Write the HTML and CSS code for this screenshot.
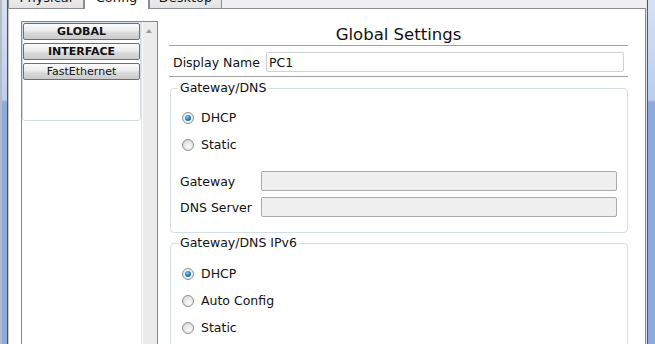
FILE: index.html
```html
<!DOCTYPE html>
<html lang="en">
<head>
    <meta charset="UTF-8">
    <meta name="viewport" content="width=device-width, initial-scale=1.0">
    <title>PC1 - Config</title>
    <link rel="stylesheet" href="styles.css">
</head>
<body>
    <div class="window">
        <div class="frame-left"></div>

        <div class="main">
            <!-- Tabs -->
            <div class="tabs">
                <div class="tab tab-physical">Physical</div>
                <div class="tab tab-config active">Config</div>
                <div class="tab tab-desktop">Desktop</div>
            </div>

            <div class="content">
                <!-- Side menu -->
                <div class="side">
                    <div class="side-list">
                        <div class="list-box">
                            <button class="nav-btn bold">GLOBAL</button>
                            <button class="nav-btn bold">INTERFACE</button>
                            <button class="nav-btn">FastEthernet</button>
                        </div>
                    </div>
                    <div class="side-scroll"><span class="arrow-up"></span></div>
                </div>

                <!-- Settings panel -->
                <div class="panel">
                    <div class="title">Global Settings</div>

                    <div class="name-row">
                        <label class="name-label">Display Name</label>
                        <input class="name-input" type="text" value="PC1">
                    </div>

                    <fieldset class="group">
                        <legend>Gateway/DNS</legend>
                        <div class="opt"><span class="radio checked"></span>DHCP</div>
                        <div class="opt"><span class="radio"></span>Static</div>
                        <div class="field first">
                            <label>Gateway</label>
                            <input class="off-input" type="text" disabled>
                        </div>
                        <div class="field">
                            <label>DNS Server</label>
                            <input class="off-input" type="text" disabled>
                        </div>
                    </fieldset>

                    <fieldset class="group group-v6">
                        <legend>Gateway/DNS IPv6</legend>
                        <div class="opt"><span class="radio checked"></span>DHCP</div>
                        <div class="opt"><span class="radio"></span>Auto Config</div>
                        <div class="opt"><span class="radio"></span>Static</div>
                        <div class="field first">
                            <label>IPv6 Gateway</label>
                            <input class="off-input" type="text" disabled>
                        </div>
                        <div class="field">
                            <label>IPv6 DNS Server</label>
                            <input class="off-input" type="text" disabled>
                        </div>
                    </fieldset>
                </div>
            </div>
        </div>

        <div class="frame-right"></div>
    </div>
</body>
</html>
```

FILE: styles.css
```css
body {
    margin: 0;
    height: 344px;
    overflow: hidden;
    font-family: "DejaVu Sans", Verdana, sans-serif;
    font-size: 12.5px;
    color: #111;
    background-color: #f0f0f0;
}
.window {
    display: flex;
    height: 344px;
}

/* window frame */
.frame-left {
    flex: none;
    width: 8px;
    background:
        linear-gradient(to right, #b7bcc4 0 2px, transparent 2px 7px, #4e5259 7px 8px),
        linear-gradient(to bottom, #d6e1f3 0, #bccdee 100px, #8fa8dd 102px, #8fa8dd 100%);
}
.frame-right {
    flex: none;
    width: 9px;
    background:
        linear-gradient(to right, #e2e2e2 0 1px, #55595f 1px 2px, transparent 2px),
        linear-gradient(to bottom, #d6e1f3 0, #bccdee 100px, #8fa8dd 102px, #8fa8dd 100%);
}
.main {
    flex: none;
    width: 638px;
    display: flex;
    flex-direction: column;
}

/* tabs */
.tabs {
    flex: none;
    display: flex;
    align-items: flex-end;
    height: 8px;
}
.tab {
    flex: none;
    box-sizing: border-box;
    height: 22px;
    padding-top: 3px;
    border: 1px solid #898c93;
    border-bottom: none;
    background: linear-gradient(#f6f6f6, #e3e3e3);
    font-size: 13px;
    line-height: 15px;
    text-align: center;
}
.tab-physical {
    width: 76px;
}
.tab-config {
    width: 65px;
}
.tab-desktop {
    width: 73px;
}
.tab.active {
    position: relative;
    height: 23px;
    margin-bottom: -1px;
    background: #fff;
}

/* content */
.content {
    flex: 1;
    display: flex;
    gap: 11px;
    padding-left: 12px;
    background: #fff;
    border: 1px solid #8a8d94;
    border-left-color: #c4c7cc;
    border-bottom: none;
    overflow: hidden;
}

/* side menu */
.side {
    flex: none;
    box-sizing: border-box;
    width: 137px;
    margin-top: 12px;
    border: 1px solid #828790;
    border-bottom: none;
    display: flex;
}
.side-list {
    width: 119px;
}
.list-box {
    box-sizing: border-box;
    width: 119px;
    height: 99px;
    border: 1px solid #d5dde4;
    border-radius: 0 0 3px 3px;
}
.nav-btn {
    display: block;
    box-sizing: border-box;
    width: 117px;
    height: 17px;
    margin: 0 0 3px;
    padding: 0;
    border: 1px solid #6f6f6f;
    border-radius: 2px;
    background: linear-gradient(#fbfbfb, #ececec 45%, #d9d9d9 60%, #cbcbcb);
    font-family: "DejaVu Sans", Verdana, sans-serif;
    font-size: 11px;
    line-height: 15px;
    color: #111;
}
.nav-btn.bold {
    font-weight: bold;
}
.side-scroll {
    width: 16px;
    display: flex;
    justify-content: center;
    padding-top: 7px;
    background: linear-gradient(to right, #e4e4e4 0 1px, #fafafa 1px 2px, #ececec 2px);
}
.arrow-up {
    width: 0;
    height: 0;
    border-left: 3.5px solid transparent;
    border-right: 3.5px solid transparent;
    border-bottom: 4px solid #9a9a9a;
}

/* settings panel */
.panel {
    flex: none;
    width: 459px;
    display: flex;
    flex-direction: column;
}
.title {
    padding-top: 16px;
    font-size: 16.5px;
    line-height: 20px;
    text-align: center;
    border-bottom: 1px solid #a0a0a0;
}
.name-row {
    display: flex;
    align-items: center;
    padding: 6px 4px 4px;
    border-bottom: 1px solid #a0a0a0;
}
.name-label {
    flex: none;
    width: 93px;
}
.name-input {
    flex: 1;
    min-width: 0;
    box-sizing: border-box;
    height: 20px;
    padding: 0 2px;
    border: 1px solid #cdd2d7;
    border-radius: 2px;
    font-family: inherit;
    font-size: 12.5px;
    color: #111;
}
.group {
    margin: 4px 0 0 1px;
    padding: 9px 10px 15px 9px;
    min-width: 0;
    border: 1px solid #d5dee5;
    border-radius: 4px;
}
.group-v6 {
    margin-top: 3px;
    padding-top: 10px;
}
.group legend {
    margin-left: -2px;
    padding: 0 2px;
    line-height: 14px;
}
.opt {
    display: flex;
    align-items: center;
    gap: 7px;
    height: 27px;
    padding-left: 2px;
}
.radio {
    flex: none;
    box-sizing: border-box;
    width: 12px;
    height: 12px;
    border-radius: 50%;
    border: 1px solid #8f9092;
    background: radial-gradient(circle at 60% 65%, #fbfbfb 0, #e4e4e4 55%, #c9c9c9 100%);
    display: flex;
    align-items: center;
    justify-content: center;
}
.radio.checked {
    background: radial-gradient(circle, #ffffff 0, #eef1f4 60%, #cfd3d8 100%);
}
.radio.checked::after {
    content: "";
    width: 6px;
    height: 6px;
    border-radius: 50%;
    background: radial-gradient(circle at 40% 35%, #8fd0f5 0, #2a83c8 45%, #0f3f6d 100%);
}
.field {
    display: flex;
    align-items: center;
    margin-top: 6px;
}
.field.first {
    margin-top: 13px;
}
.field label {
    flex: none;
    width: 81px;
    white-space: nowrap;
}
.off-input {
    flex: 1;
    min-width: 0;
    box-sizing: border-box;
    height: 20px;
    border: 1px solid #ababab;
    border-radius: 2px;
    background: #f0f0f0;
}
```
